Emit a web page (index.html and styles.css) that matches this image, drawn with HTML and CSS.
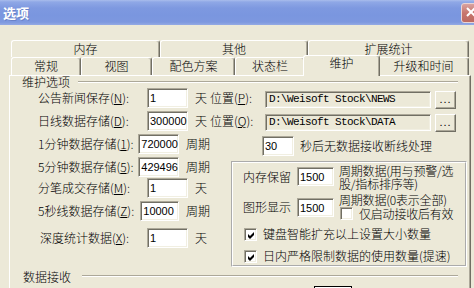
FILE: index.html
```html
<!DOCTYPE html>
<html>
<head>
<meta charset="utf-8">
<title>选项</title>
<link rel="stylesheet" href="styles.css">
</head>
<body>
<div class="titlebar">
  <span class="title">选项</span>
  <div class="close"><svg width="21" height="20" viewBox="0 0 21 20"><path d="M6 5 L14 13 M14 5 L6 13" stroke="#fff" stroke-width="2"/></svg></div>
</div>
<div class="client">
  <div class="tabrow back">
    <div class="tab t-mem">内存</div>
    <div class="tab t-other">其他</div>
    <div class="tab t-ext">扩展统计</div>
  </div>
  <div class="tabrow front">
    <div class="tab t-gen">常规</div>
    <div class="tab t-view">视图</div>
    <div class="tab t-color">配色方案</div>
    <div class="tab t-status">状态栏</div>
    <div class="tab sel">维护</div>
    <div class="tab t-upd">升级和时间</div>
  </div>
  <div class="panel">
    <div class="sect s1"><span>维护选项</span><i class="rule"></i></div>
    <div class="cols">
      <div class="left">
        <div class="row r1"><span class="lbl">公告新闻保存(<u>N</u>):</span><span class="edit">1</span><span class="unit">天</span></div>
        <div class="row r2"><span class="lbl">日线数据存储(<u>D</u>):</span><span class="edit">300000</span><span class="unit">天</span></div>
        <div class="row r3"><span class="lbl">1分钟数据存储(<u>1</u>):</span><span class="edit">720000</span><span class="unit">周期</span></div>
        <div class="row r4"><span class="lbl">5分钟数据存储(<u>5</u>):</span><span class="edit">429496</span><span class="unit">周期</span></div>
        <div class="row r5"><span class="lbl">分笔成交存储(<u>M</u>):</span><span class="edit">1</span><span class="unit">天</span></div>
        <div class="row r6"><span class="lbl">5秒线数据存储(<u>Z</u>):</span><span class="edit">10000</span><span class="unit">周期</span></div>
        <div class="row r7"><span class="lbl lbl-x">深度统计数据(<u>X</u>):</span><span class="edit">1</span><span class="unit">天</span></div>
      </div>
      <div class="right">
        <div class="prow"><span class="plbl">位置(<u>P</u>):</span><span class="path">D:\Weisoft Stock\NEWS</span><span class="dots">...</span></div>
        <div class="prow p2"><span class="plbl">位置(<u>Q</u>):</span><span class="path">D:\Weisoft Stock\DATA</span><span class="dots">...</span></div>
        <div class="srow"><span class="edit e30">30</span><span class="stext">秒后无数据接收断线处理</span></div>
        <div class="box">
          <div class="brow b1">
            <span class="blbl">内存保留</span><span class="edit e15">1500</span>
            <div class="desc"><div>周期数据(用与预警/选</div><div>股/指标排序等)</div></div>
          </div>
          <div class="brow b2">
            <span class="blbl">图形显示</span><span class="edit e15">1500</span>
            <div class="desc">
              <div>周期数据(0表示全部)</div>
              <div class="chkline"><span class="chk"></span><span class="ctext">仅启动接收后有效</span></div>
            </div>
          </div>
          <div class="chkrow c1"><span class="chk on"><svg width="9" height="9" viewBox="0 0 9 9"><path d="M1 3 L3 5 L7 1 L7 4 L3 8 L1 6 Z" fill="#000"/></svg></span><span class="ctext">键盘智能扩充以上设置大小数量</span></div>
          <div class="chkrow c2"><span class="chk on"><svg width="9" height="9" viewBox="0 0 9 9"><path d="M1 3 L3 5 L7 1 L7 4 L3 8 L1 6 Z" fill="#000"/></svg></span><span class="ctext">日内严格限制数据的使用数量(提速)</span></div>
        </div>
      </div>
    </div>
    <div class="sect s2"><span>数据接收</span><i class="rule"></i></div>
    <div class="defbtn"></div>
  </div>
</div>
</body>
</html>
```
FILE: styles.css
```css
html, body {
  margin: 0;
  padding: 0;
}
body {
  width: 474px;
  height: 288px;
  overflow: hidden;
  background: #ECE9D8;
  color: #000;
  font: 300 12px/14px "Noto Sans CJK SC", "Liberation Sans", sans-serif;
}
u { text-decoration: underline; text-underline-offset: 1px; }

.titlebar {
  height: 25px;
  display: flex;
  align-items: center;
  justify-content: space-between;
  padding-left: 3px;
  background: linear-gradient(#A9BDEC 0, #8FA8E6 2px, #7E99E0 8px, #7A96DF 60%, #7D98DF 88%, #94AAE4 100%);
}
.title {
  color: #fff;
  font-weight: bold;
  font-size: 13px;
  text-shadow: 1px 1px #6A82C8;
}
.close {
  width: 21px;
  height: 20px;
  margin-right: -8px;
  box-sizing: border-box;
  border: 1px solid #E9D4D4;
  border-radius: 3px;
  background: linear-gradient(#D9A3A0, #C7766E 50%, #BC6A62);
}
.close svg { display: block; margin: -1px 0 0 -1px; }

.client { padding-top: 15px; }

.tabrow {
  display: flex;
  margin-left: 11px;
  width: 458px;
}
.back { height: 17px; }
.front { height: 18px; align-items: flex-end; }
.tab {
  box-sizing: border-box;
  height: 100%;
  border-top: 1px solid #fff;
  border-left: 1px solid #fff;
  border-right: 1px solid #716F64;
  box-shadow: inset -1px 0 #ACA899;
  border-radius: 3px 3px 0 0;
  text-align: center;
  white-space: nowrap;
}
.back .tab { line-height: 15px; }
.front .tab { line-height: 16px; }
.t-mem { width: 149px; }
.t-other { width: 148px; }
.t-ext { width: 161px; }
.t-gen { width: 70px; }
.t-view { width: 71px; }
.t-color { width: 83px; }
.t-status { width: 70px; }
.t-upd { width: 91px; }
.front .sel {
  width: 77px;
  height: 21px;
  margin: 0 -2px -1px;
  position: relative;
  z-index: 2;
  background: #ECE9D8;
  line-height: 14px;
}

.panel {
  box-sizing: border-box;
  margin-left: 9px;
  width: 462px;
  height: 213px;
  border-top: 1px solid #fff;
  border-left: 1px solid #fff;
  border-right: 1px solid #716F64;
  box-shadow: inset -1px 0 #ACA899;
}

.sect {
  display: flex;
  align-items: center;
  height: 12px;
  line-height: 12px;
  padding: 0 12px 0 12px;
  white-space: nowrap;
}
.sect .rule {
  flex: 1;
  height: 0;
  margin: 1px 0 0 8px;
  border-top: 1px solid #ACA899;
  border-bottom: 1px solid #fff;
}
.s1 { margin-top: -1px; height: 13px; }
.s2 { margin-top: 4px; padding-left: 13px; }
.s2 .rule { margin-left: 11px; margin-top: -3px; }

.cols { display: flex; height: 179px; }
.left { width: 172px; padding-left: 28px; }
.row {
  display: flex;
  align-items: center;
  height: 20px;
  margin-top: 3px;
}
.r1 { margin-top: 0; }
.r5 { margin-top: 1px; }
.r7 { margin-top: 7px; }
.lbl { width: 109px; white-space: nowrap; }
.lbl-x { padding-left: 2px; width: 107px; }
.unit { margin-left: 7px; white-space: nowrap; }

.edit {
  box-sizing: border-box;
  width: 41px;
  height: 20px;
  background: #fff;
  border-top: 1px solid #ACA899;
  border-left: 1px solid #ACA899;
  border-right: 1px solid #fff;
  border-bottom: 1px solid #fff;
  box-shadow: inset 1px 1px #716F64, inset -1px -1px #F1EFE2;
  font: 11px/16px "Liberation Sans", sans-serif;
  padding-left: 2px;
  padding-top: 1px;
}

.right { flex: 1; }
.prow {
  display: flex;
  align-items: center;
  height: 20px;
}
.p2 { margin-top: 3px; }
.plbl { width: 55px; white-space: nowrap; }
.path {
  box-sizing: border-box;
  width: 166px;
  height: 17px;
  margin-top: 2px;
  border-top: 1px solid #ACA899;
  border-left: 1px solid #ACA899;
  border-right: 1px solid #fff;
  border-bottom: 1px solid #fff;
  box-shadow: inset 1px 1px #716F64, inset -1px -1px #F1EFE2;
  font: 11px/15px "Liberation Mono", monospace;
  letter-spacing: -0.6px;
  padding-left: 3px;
  white-space: nowrap;
  overflow: hidden;
}
.dots {
  box-sizing: border-box;
  width: 21px;
  height: 18px;
  margin-left: 4px;
  margin-top: 3px;
  border-top: 1px solid #fff;
  border-left: 1px solid #fff;
  border-right: 1px solid #716F64;
  border-bottom: 1px solid #716F64;
  box-shadow: inset -1px -1px #ACA899;
  font: 11px/14px "Liberation Sans", sans-serif;
  text-align: center;
  letter-spacing: 1px;
}
.srow {
  display: flex;
  align-items: center;
  height: 20px;
  margin-top: 5px;
  padding-left: 52px;
}
.e30 { width: 32px; }
.stext { margin-left: 6px; white-space: nowrap; }

.box {
  box-sizing: border-box;
  width: 236px;
  height: 106px;
  margin: 5px 0 0 21px;
  border: 2px groove #fff;
  padding: 1px 0 0 10px;
}
.brow { display: flex; align-items: flex-start; }
.blbl { width: 54px; white-space: nowrap; }
.e15 { width: 37px; height: 19px; }
.desc { margin-left: 5px; line-height: 13px; white-space: nowrap; letter-spacing: -0.2px; }
.b1 { height: 26px; }
.b1 .blbl { margin-top: 6px; }
.b1 .e15 { margin-top: 3px; }
.b2 { height: 33px; }
.b2 .blbl { margin-top: 10px; }
.b2 .e15 { margin-top: 8px; }
.b2 .desc { margin-top: 3px; }
.chkline { display: flex; align-items: center; margin-top: 1px; margin-left: 1px; }
.chkline .ctext { margin-left: 6px; }

.chk {
  box-sizing: border-box;
  width: 13px;
  height: 13px;
  flex: none;
  background: #fff;
  border-top: 1px solid #ACA899;
  border-left: 1px solid #ACA899;
  border-right: 1px solid #fff;
  border-bottom: 1px solid #fff;
  box-shadow: inset 1px 1px #716F64, inset -1px -1px #F1EFE2;
  padding: 2px;
}
.chk svg { display: block; }
.chkrow { display: flex; align-items: center; height: 16px; margin-left: 1px; }
.chkrow .ctext { margin-left: 6px; white-space: nowrap; }
.c1 { margin-top: 3px; }
.c2 { margin-top: 6px; }

.defbtn {
  width: 36px;
  height: 10px;
  margin: 3px 0 0 304px;
  border-top: 1px solid #000;
  border-left: 1px solid #000;
  border-right: 1px solid #000;
  box-shadow: inset 1px 1px #fff;
}
```
